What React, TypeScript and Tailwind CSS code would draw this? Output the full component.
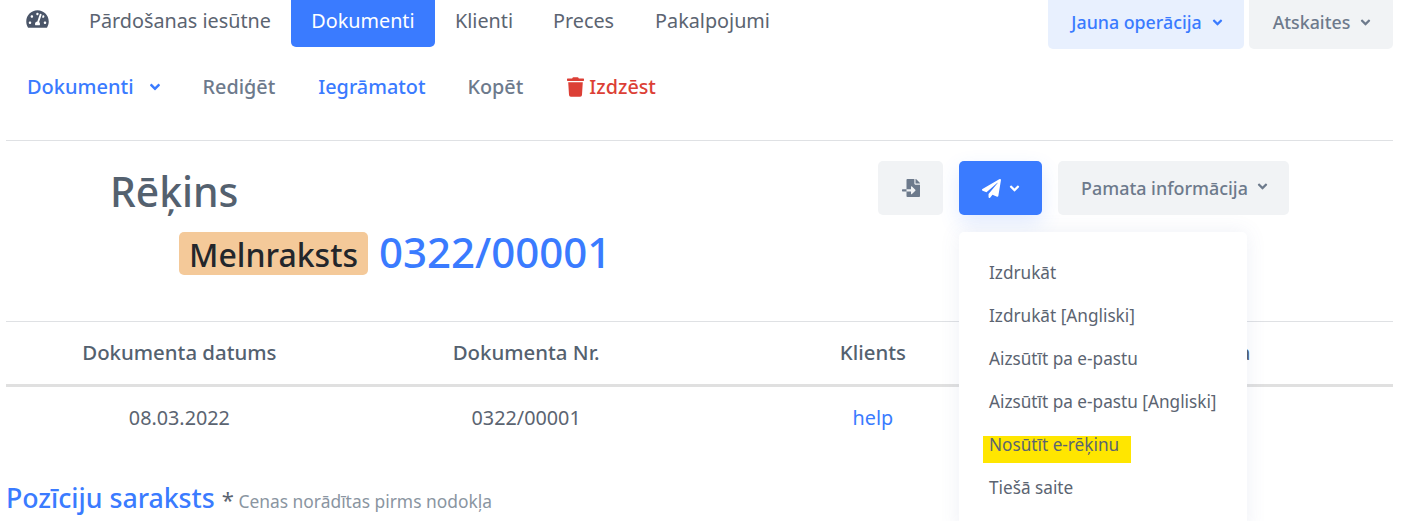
import { FaTachometerAlt, FaTrash, FaFileImport, FaPaperPlane, FaAngleDown } from "react-icons/fa";

const font = { fontFamily: '"Noto Sans", sans-serif' };

export default function App() {
  return (
    <div style={font} className="relative w-[1412px] h-[521px] overflow-hidden bg-white text-[#4a5568]">
      <div className="pl-[6px] pr-[19px]">
        {/* top nav */}
        <div className="flex items-start h-[49px] text-[#5b6471] text-[19.8px]">
          <div className="w-[83px] h-[47px] pl-[20px] pt-[9px] flex text-[#4a5568]"><FaTachometerAlt className="w-[23px] h-[20px]" /></div>
          <div className="h-[41px] flex items-center">Pārdošanas iesūtne</div>
          <div className="ml-[20px] h-[47px] w-[144px] flex items-center justify-center rounded-b-[5px] bg-[#3a7bff] text-white pb-[5px]">Dokumenti</div>
          <div className="ml-[20px] h-[41px] flex items-center">Klienti</div>
          <div className="ml-[40px] h-[41px] flex items-center">Preces</div>
          <div className="ml-[41px] h-[41px] flex items-center">Pakalpojumi</div>
          <div className="ml-auto flex gap-[5px]">
            <div className="h-[49px] w-[196px] rounded-b-[5px] bg-[#e8f0fe] text-[#3a7bff] font-medium text-[17.8px] flex items-center justify-center gap-[8px] pl-[4px] pb-[5px]">Jauna operācija <FaAngleDown className="w-[15px] h-[15px]" /></div>
            <div className="h-[49px] w-[144px] rounded-b-[5px] bg-[#f1f3f5] text-[#6d7a8c] font-medium text-[17.8px] flex items-center justify-center gap-[8px] pl-[4px] pb-[5px]">Atskaites <FaAngleDown className="w-[15px] h-[15px]" /></div>
          </div>
        </div>
        {/* sub nav */}
        <div className="h-[92px] border-b border-[#dfe1e4] flex items-start pt-[24px] text-[19.8px] font-medium text-[#6d7a8c]">
          <div className="pl-[21px] flex items-center text-[#3a7bff] gap-[13px] h-[28px] text-[20px]">Dokumenti <FaAngleDown className="w-[16px] h-[16px]" /></div>
          <div className="ml-[40px] h-[28px] flex items-center">Rediģēt</div>
          <div className="ml-[43px] h-[28px] flex items-center text-[#3a7bff]">Iegrāmatot</div>
          <div className="ml-[42px] h-[28px] flex items-center">Kopēt</div>
          <div className="ml-[44px] h-[28px] flex items-center text-[#dc3f36] gap-[5px]"><FaTrash className="w-[17px] h-[20px]" />Izdzēst</div>
        </div>
        {/* header */}
        <div className="h-[181px] border-b border-[#dfe1e4] flex items-start justify-between">
          <div>
            <h1 className="pl-[104px] pt-[22px] h-[91px] text-[40.8px] leading-[56px] font-medium text-[#54616f]">Rēķins</h1>
            <div className="pl-[173px] flex items-start gap-[11px]">
              <span className="h-[43px] w-[189px] rounded-[5px] bg-[#f4c999] text-[#23262b] text-[32px] font-medium leading-[46px] text-center">Melnraksts</span>
              <span className="text-[#3a7bff] text-[42px] leading-[40px] font-medium">0322/00001</span>
            </div>
          </div>
          <div className="mr-[104px] pt-[20px] flex gap-[16px]">
            <div className="w-[65px] h-[54px] rounded-[5px] bg-[#f1f3f5] text-[#6d7a8c] flex items-center justify-center"><FaFileImport className="w-[20px] h-[18px]" /></div>
            <div className="w-[83px] h-[54px] rounded-[5px] bg-[#3a7bff] text-white flex items-center justify-center gap-[6px] pl-[2px] shadow-[0_8px_20px_rgba(58,123,255,0.15)]"><FaPaperPlane className="w-[19px] h-[19px]" /><FaAngleDown className="w-[15px] h-[15px]" /></div>
            <div className="w-[231px] h-[54px] rounded-[5px] bg-[#f1f3f5] text-[#6d7a8c] text-[17.9px] font-medium flex items-center justify-center gap-[7px] pl-[4px]">Pamata informācija <FaAngleDown className="w-[15px] h-[15px] -mt-[4px]" /></div>
          </div>
        </div>
        {/* table */}
        <div className="grid grid-cols-4 h-[65px] border-b-[3px] border-[#e0e0e0] items-center text-center text-[20.4px] font-medium text-[#54616f]">
          <div className="pb-[1px]">Dokumenta datums</div>
          <div className="pb-[1px]">Dokumenta Nr.</div>
          <div className="pb-[1px]">Klients</div>
          <div className="pb-[1px]">Valūta</div>
        </div>
        <div className="grid grid-cols-4 h-[61px] items-center text-center text-[19.8px] text-[#5b6471]">
          <div>08.03.2022</div>
          <div>0322/00001</div>
          <div className="text-[#3a7bff]">help</div>
          <div></div>
        </div>
        <div className="mt-[32px] flex items-baseline gap-[7px] leading-[36px]">
          <span className="text-[26.7px] font-medium text-[#3a7bff]">Pozīciju saraksts</span>
          <span className="text-[#8a95a1] text-[17.4px]"><span className="text-[22px] text-[#5b6471]">*</span> Cenas norādītas pirms nodokļa</span>
        </div>
      </div>
      {/* dropdown menu */}
      <div className="absolute left-[959px] top-[232px] w-[288px] h-[300px] bg-white rounded-[5px] shadow-[0_0_20px_rgba(90,110,170,0.1)] pt-[19px] pl-[30px] text-[17.2px] text-[#5b6471]">
        {["Izdrukāt", "Izdrukāt [Angliski]", "Aizsūtīt pa e-pastu", "Aizsūtīt pa e-pastu [Angliski]"].map((t) => (
          <div key={t} className="h-[43px] flex items-center">{t}</div>
        ))}
        <div className="h-[43px] flex items-center relative">
          <span className="absolute left-[-6px] top-[13px] w-[148px] h-[27px] bg-[#ffe600]"></span>
          <span className="relative">Nosūtīt e-rēķinu</span>
        </div>
        <div className="h-[43px] flex items-center">Tiešā saite</div>
      </div>
    </div>
  );
}
